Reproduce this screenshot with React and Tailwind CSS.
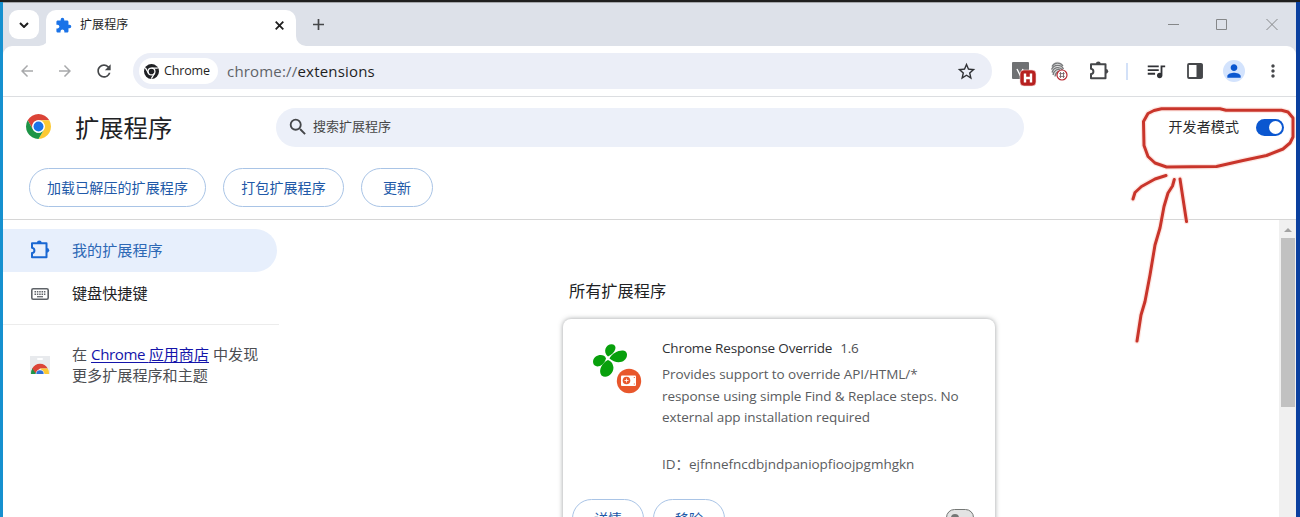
import React from "react";
import {
  MdArrowBack,
  MdArrowForward,
  MdRefresh,
  MdStarBorder,
  MdSearch,
  MdPerson,
  MdMoreVert,
  MdExtension,
  MdQueueMusic,
} from "react-icons/md";

function PuzzleOutline({ className }) {
  return (
    <svg viewBox="0 0 20 20" className={className} fill="none">
      <path
        d="M2 3.300h14.500v14H2v-4.200c3.200-.4 3.200-5 0-5.400z"
        stroke="currentColor"
        strokeWidth="2"
        strokeLinejoin="round"
      />
      <path d="M6.900 3a2.400 2.400 0 0 1 4.800 0z" fill="currentColor" />
      <path d="M16.800 7.900a2.400 2.400 0 0 1 0 4.800z" fill="currentColor" />
    </svg>
  );
}

function ChromeLogo({ className }) {
  return (
    <svg viewBox="0 0 48 48" className={className}>
      <circle cx="24" cy="24" r="24" fill="#fff" />
      <path d="M24 12h20.780A24 24 0 0 0 3.220 12l10.390 18A12 12 0 0 1 24 12z" fill="#db4437" />
      <path d="M34.390 30 24 48a24 24 0 0 0 20.780-36H24a12 12 0 0 1 10.390 18z" fill="#fcc934" />
      <path d="M13.610 30 3.220 12A24 24 0 0 0 24 48l10.390-18a12 12 0 0 1-20.780 0z" fill="#1e9447" />
      <circle cx="24" cy="24" r="12" fill="#fff" />
      <circle cx="24" cy="24" r="9.500" fill="#1a73e8" />
    </svg>
  );
}

function ChromeMono({ className }) {
  return (
    <svg viewBox="0 0 48 48" className={className}>
      <circle cx="24" cy="24" r="24" fill="#202124" />
      <circle cx="24" cy="24" r="11" fill="none" stroke="#fff" strokeWidth="4" />
      <path d="M24 13h20M14.500 29.500l-10-17.300M33.500 29.500l-10 17.300" stroke="#fff" strokeWidth="4" />
    </svg>
  );
}

function TabStrip() {
  return (
    <div className="flex h-11 items-stretch bg-[#dde1e9] border-t border-[#a5a7ab]">
      <div className="ml-[6px] mt-[7px] flex h-[29px] w-[30px] items-center justify-center rounded-[9px] bg-white">
        <svg viewBox="0 0 10 6" className="h-[6px] w-[10px]" fill="none">
          <path d="M1 1l4 4 4-4" stroke="#1f1f1f" strokeWidth="2" />
        </svg>
      </div>
      <svg viewBox="0 0 10 10" className="h-[10px] w-[10px] self-end -ml-[3px] translate-x-[3px]">
        <path d="M10 0v10H0A10 10 0 0 0 10 0z" fill="#fff" />
      </svg>
      <div className="mt-[7px] flex w-[250px] items-center rounded-t-[10px] bg-white pb-[6px] pl-[9px]">
        <MdExtension className="size-[17px] text-[#1a73e8]" />
        <span className="ml-[8px] text-[12px] leading-4 tracking-[0.1px] text-[#1f1f1f]">扩展程序</span>
        <svg viewBox="0 0 9 9" className="ml-auto mr-[12px] size-[9px]">
          <path d="M.7.7l7.600 7.600M8.300.7L.7 8.300" stroke="#1f1f1f" strokeWidth="1.800" />
        </svg>
      </div>
      <svg viewBox="0 0 10 10" className="h-[10px] w-[10px] self-end">
        <path d="M0 0v10h10A10 10 0 0 1 0 0z" fill="#fff" />
      </svg>
      <svg viewBox="0 0 11 11" className="ml-[7px] mt-[16px] size-[11px]">
        <path d="M5.500 0v11M0 5.500h11" stroke="#45474a" strokeWidth="1.700" />
      </svg>
      <div className="ml-auto mr-[18px] flex items-center">
        <svg viewBox="0 0 12 12" className="size-[12px]">
          <path d="M0 5.500h11" stroke="#858789" />
        </svg>
        <svg viewBox="0 0 12 12" className="ml-[36px] size-[12px]" fill="none">
          <path d="M.5.500h10v10H.5z" stroke="#858789" />
        </svg>
        <svg viewBox="0 0 12 12" className="ml-[38px] size-[12px]">
          <path d="M.5 0l11 11M11.500 0L.5 11" stroke="#858789" />
        </svg>
      </div>
    </div>
  );
}

function Toolbar() {
  return (
    <div className="bg-[#dde1e9]">
      <div className="flex h-[51px] items-center rounded-t-[9px] border-b border-[#dcdee1] bg-white">
        <MdArrowBack className="ml-[15px] size-[18px] text-[#a8a9ab]" />
        <MdArrowForward className="ml-[20px] size-[18px] text-[#a8a9ab]" />
        <MdRefresh className="ml-[20px] mr-px size-[20px] text-[#45474a]" />
        <div className="ml-[18px] flex h-[36px] w-[859px] items-center rounded-full bg-[#ebeef7]">
          <div className="ml-[6px] flex h-[26px] w-[79px] items-center rounded-full bg-white pl-[5px]">
            <ChromeMono className="size-[15px]" />
            <span className="ml-[5px] text-[12.5px] leading-4 tracking-[-0.16px] text-[#1f1f1f]">Chrome</span>
          </div>
          <span className="ml-[9px] text-[15px] leading-5 tracking-[0.19px] text-[#1f1f1f]">
            <span className="text-[#5f6368]">chrome://</span>extensions
          </span>
          <MdStarBorder className="ml-auto mr-[15px] size-[21px] text-[#303236]" />
        </div>
        <svg viewBox="0 0 26 26" className="ml-[19px] mt-[6px] size-[26px]">
          <rect x="1" y="1" width="17" height="17" rx="1" fill="#6f7173" />
          <path d="M6 8l3 6M12 8l-3 7" stroke="#fff" strokeWidth="1.400" />
          <rect x="9" y="9" width="16" height="16" rx="4" fill="#b7201f" stroke="#f6d9d8" strokeWidth=".6" />
          <path d="M14 12.500v9M20 12.500v9M14 17h6" stroke="#fff" strokeWidth="2.400" />
        </svg>
        <svg viewBox="0 0 18 20" className="ml-[13px] mr-px h-[20px] w-[18px]" fill="none">
          <ellipse cx="7.500" cy="8" rx="6" ry="7.500" fill="#e4e4e4" />
          <path
            d="M2 5.500C4 1.500 10 .5 13 5M1.500 8.500C4 3 11 3 13.500 8M2 11.500C4 5.500 10 5.500 12.500 9M3 14c1-5 5-6.500 7-5M5 15.500c.3-2.500 1-4 3-5"
            stroke="#77797b"
            strokeWidth="1.300"
          />
          <circle cx="12" cy="14" r="5" fill="#fff" stroke="#b92c34" strokeWidth="1.200" />
          <path d="M10.500 11v6M13.500 11v6M9.300 12.600h5.400M9.300 15.400h5.400" stroke="#77666a" strokeWidth=".9" />
        </svg>
        <PuzzleOutline className="ml-[20px] size-[20px] text-[#45474a]" />
        <div className="ml-[17px] h-[17px] w-[2px] bg-[#d3e1f8]" />
        <MdQueueMusic className="ml-[17px] size-[22px] text-[#303236]" />
        <svg viewBox="0 0 16 16" className="ml-[20px] size-[16px]">
          <rect x="1" y="1" width="14" height="14" rx="1" fill="none" stroke="#45474a" strokeWidth="1.800" />
          <path d="M9.500 1h6v14h-6z" fill="#45474a" />
        </svg>
        <div className="ml-[20px] flex size-[22px] items-center justify-center rounded-full bg-[#d3e3fd]">
          <MdPerson className="size-[20px] text-[#0b57d0]" />
        </div>
        <MdMoreVert className="ml-[18px] size-[20px] text-[#45474a]" />
      </div>
    </div>
  );
}

function PillButton({ className, children }) {
  return (
    <button
      className={
        "flex h-[39px] items-center justify-center rounded-full border border-[#a9c4e6] text-[14px] tracking-[0.1px] text-[#2159a8] " +
        className
      }
    >
      {children}
    </button>
  );
}

function Header() {
  return (
    <header className="h-[123px] border-b border-[#d6d6d6]">
      <div className="flex h-[60px] items-center">
        <ChromeLogo className="mb-px ml-[23px] size-[25px]" />
        <h1 className="ml-[24px] mt-px w-[201px] text-[24.300px] leading-8 text-[#202124]">扩展程序</h1>
        <div className="flex h-[39px] w-[748px] items-center rounded-full bg-[#ecf0f9]">
          <MdSearch className="ml-[11px] size-[22px] text-[#45474a]" />
          <span className="ml-[4px] text-[13px] text-[#474747]">搜索扩展程序</span>
        </div>
        <span className="mb-[2px] ml-auto text-[14px] tracking-[0.1px] text-[#2b2c2e]">开发者模式</span>
        <div className="ml-[17px] mr-[12px] flex h-[17px] w-[28px] items-center justify-end rounded-full bg-[#0b57d0] pr-[2px]">
          <div className="size-[13px] rounded-full bg-white" />
        </div>
      </div>
      <div className="ml-[26px] mt-[11px] flex gap-[17px]">
        <PillButton className="w-[177px]">加载已解压的扩展程序</PillButton>
        <PillButton className="w-[121px]">打包扩展程序</PillButton>
        <PillButton className="w-[72px]">更新</PillButton>
      </div>
    </header>
  );
}

function Keyboard() {
  return (
    <svg viewBox="0 0 18 12" className="ml-[28px] h-[12px] w-[18px]" fill="none">
      <rect x=".8" y=".8" width="16.400" height="10.400" rx="1.400" stroke="#5f6368" strokeWidth="1.600" />
      <path d="M3.500 3.700h11M3.500 6.200h11" stroke="#5f6368" strokeWidth="1.500" strokeDasharray="1.500 .85" />
      <path d="M6 8.700h6" stroke="#5f6368" strokeWidth="1.200" />
    </svg>
  );
}

function StoreIcon() {
  return (
    <svg viewBox="0 0 20 18" className="ml-[27px] mt-[12px] h-[18px] w-[20px] shrink-0">
      <path d="M0 0h20v18H0z" fill="#e8eaed" />
      <rect x="7" y="2" width="6" height="2" rx="1" fill="#fff" />
      <path d="M1 18a9.500 9.500 0 0 1 1.600-6L8 18z" fill="#1e9447" />
      <path d="M2.200 12.500a9 9.500 0 0 1 15.600 0H10L5.500 17z" fill="#db4437" />
      <path d="M10 12.500h7.800A9.500 9.500 0 0 1 19 18h-5z" fill="#fcc934" />
      <path d="M5.600 18a4.400 4.400 0 0 1 8.800 0z" fill="#fff" />
      <path d="M6.300 18a3.700 3.700 0 0 1 7.400 0z" fill="#2f70d8" />
    </svg>
  );
}

function Sidebar() {
  return (
    <nav className="w-[276px] shrink-0 pt-[9px]">
      <div className="flex h-[43px] w-[274px] items-center rounded-r-full bg-[#e7effc] text-[#2d68b5]">
        <PuzzleOutline className="mb-[2px] ml-[27px] size-[20px] text-[#1967d2]" />
        <span className="ml-[22px] text-[15.100px]">我的扩展程序</span>
      </div>
      <div className="flex h-[43px] items-center text-[#202124]">
        <Keyboard />
        <span className="ml-[23px] text-[15.100px]">键盘快捷键</span>
      </div>
      <div className="mt-[9px] h-px bg-[#ececec]" />
      <div className="mt-[19px] flex">
        <StoreIcon />
        <p className="ml-[22px] whitespace-nowrap text-[15.100px] leading-[21px] text-[#4c4e52]">
          在{" "}
          <a className="text-[#1414aa] underline underline-offset-2">
            <span className="tracking-[-0.4px]">Chrome </span>应用商店
          </a>{" "}
          中发现
          <br />
          更多扩展程序和主题
        </p>
      </div>
    </nav>
  );
}

function CloverIcon() {
  return (
    <svg viewBox="0 0 52 54" className="h-[54px] w-[52px] shrink-0">
      <g fill="#08a00c">
        <path d="M17 14.500C11.500 10 14.500 2 21 2.200c6 .5 4 9-4 12.300z" />
        <path d="M18.500 16.500C22 9 36 5 36 13c-.5 8-11 9.500-17.500 3.500z" />
        <path d="M15 16.500C13 10.500 2 13 2 20c.5 7 10.500 5.500 13-3.500z" />
        <path d="M17 18c-5 2-10.500 10-6.500 15.500 6 4.500 14-4 11.500-10-.5-2.500-2-4.500-5-5.500z" />
      </g>
      <circle cx="38" cy="39" r="12.200" fill="#e8572c" />
      <rect x="30" y="33.500" width="15" height="10.500" rx="1" fill="#fff" />
      <circle cx="35.500" cy="38.500" r="3.800" fill="#e8572c" />
      <path d="M35.500 36.500v4M33.500 38.500h4" stroke="#fff" strokeWidth=".8" />
      <path d="M42.800 35.500h1M42.800 42h1" stroke="#e8572c" strokeWidth="1" />
    </svg>
  );
}

function ExtensionCard() {
  return (
    <article className="-ml-[3px] mt-[16px] h-[230px] w-[432px] rounded-[8px] bg-white pt-[18px] shadow-[0_0_5px_rgba(60,64,67,0.5)]">
      <div className="flex h-[162px]">
        <div className="ml-[28px] mt-[5px]">
          <CloverIcon />
        </div>
        <div className="ml-[19px] whitespace-nowrap text-[13.500px] text-[#5a5c60]">
          <h3 className="flex gap-[8px] leading-[22px] text-[#303134]">
            <span className="tracking-[-0.14px]">Chrome Response Override</span>
            <span className="tracking-[-0.3px] text-[#4c4e52]">1.6</span>
          </h3>
          <p className="mt-[5px] leading-[21.500px] tracking-[-0.06px]">
            Provides support to override API/HTML/*
            <br />
            response using simple Find &amp; Replace steps. No
            <br />
            external app installation required
          </p>
          <p className="mt-[24px] leading-[22px] tracking-[-0.02px]">ID：ejfnnefncdbjndpaniopfioojpgmhgkn</p>
        </div>
      </div>
      <div className="ml-[9px] flex items-start gap-[9px]">
        <PillButton className="w-[72px]">详情</PillButton>
        <PillButton className="w-[72px]">移除</PillButton>
        <div className="ml-auto mr-[21px] mt-[10px] flex h-[17px] w-[28px] items-center rounded-full border border-[#747775] bg-[#e3e3e3] pl-[4px]">
          <div className="size-[8px] rounded-full bg-[#747775]" />
        </div>
      </div>
    </article>
  );
}

function Scrollbar() {
  return (
    <div className="ml-auto flex w-[17px] flex-col bg-[#f0f0f0] pl-[2px] pr-px">
      <svg viewBox="0 0 14 18" className="h-[18px] w-[14px]">
        <path d="M3 12l4-4 4 4z" fill="#a3a3a3" />
      </svg>
      <div className="h-[169px] bg-[#c1c1c1]" />
    </div>
  );
}

const LOOP =
  "M1143.500 121.500L1148 113.500L1154 110.500L1161.500 108.700H1220L1226 110.300H1281.500L1288 112L1293 118V137L1290 143L1283 149L1266.500 155.500L1243 160.500L1216.500 166.500L1166.500 167L1155 163L1148 156.500L1144 145.500Z";
const ARROW =
  "M1133 199L1135 192.500L1141.500 186.500L1155 179L1166 175.500M1180 179L1186.500 221.500M1174.300 179.500L1172.500 186L1168 193L1164 206.500L1160 228L1155 245L1150 275L1145 301.500L1141 315L1137 341";

function HandDrawnMarks() {
  return (
    <svg
      viewBox="0 0 1300 517"
      className="pointer-events-none absolute left-0 top-0 h-[517px] w-[1300px]"
      fill="none"
      strokeLinecap="round"
      strokeLinejoin="round"
    >
      <path d={LOOP + ARROW} stroke="#fbd9d2" strokeWidth="5.500" opacity=".6" />
      <path d={LOOP + ARROW} stroke="#c9352b" strokeWidth="3" />
    </svg>
  );
}

export default function App() {
  return (
    <div className="relative flex h-[517px] w-[1300px] flex-col overflow-hidden border-t-2 border-[#1f1f1f] font-['Open_Sans','Noto_Sans_CJK_SC',sans-serif]">
      <div className="flex min-h-0 flex-1">
        <div className="w-[3px] shrink-0 bg-[#1690cf]" />
        <div className="flex min-w-0 flex-1 flex-col bg-white">
          <TabStrip />
          <Toolbar />
          <Header />
          <div className="flex min-h-0 flex-1 overflow-hidden">
            <Sidebar />
            <main className="ml-[287px] pt-[59px]">
              <h2 className="ml-[3px] text-[16.200px] leading-6 text-[#202124]">所有扩展程序</h2>
              <ExtensionCard />
            </main>
            <Scrollbar />
          </div>
        </div>
        <div className="w-[4px] shrink-0 bg-[#0b409f]" />
      </div>
      <div className="absolute left-0 -top-[2px]">
        <HandDrawnMarks />
      </div>
    </div>
  );
}
